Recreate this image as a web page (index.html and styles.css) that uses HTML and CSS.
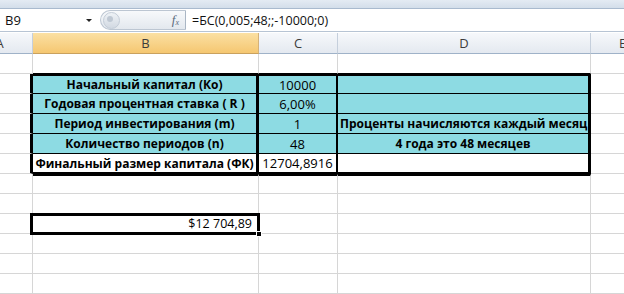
FILE: index.html
```html
<!DOCTYPE html>
<html lang="ru">
<head>
<meta charset="utf-8">
<title>Excel БС</title>
<link rel="stylesheet" href="styles.css">
</head>
<body>
<div class="app">
  <div class="ribbon-edge"></div>
  <div class="formula-bar">
    <div class="namebox"><span class="ref">B9</span><span class="arrow"></span></div>
    <div class="capsule">
      <span class="knob"><span class="knob-in"></span></span>
      <span class="fx">f<sub>x</sub></span>
    </div>
    <div class="formula">=БС(0,005;48;;-10000;0)</div>
  </div>
  <div class="sheet">
    <div class="grid">
      <div class="hd">A</div><div class="hd hd-sel">B</div><div class="hd">C</div><div class="hd">D</div><div class="hd">E</div>

      <div class="c"></div><div class="c above"></div><div class="c above"></div><div class="c above"></div><div class="c"></div>

      <div class="c lft"></div><div class="c t first cb">Начальный капитал (Ко)</div><div class="c t first cc">10000</div><div class="c t first cd"></div><div class="c"></div>
      <div class="c lft"></div><div class="c t cb">Годовая процентная ставка ( R )</div><div class="c t cc">6,00%</div><div class="c t cd"></div><div class="c"></div>
      <div class="c lft"></div><div class="c t cb">Период инвестирования (m)</div><div class="c t cc">1</div><div class="c t cd left">Проценты начисляются каждый месяц</div><div class="c"></div>
      <div class="c lft"></div><div class="c t cb">Количество периодов (n)</div><div class="c t cc">48</div><div class="c t cd">4 года это 48 месяцев</div><div class="c"></div>
      <div class="c lft"></div><div class="c w last cb">Финальный размер капитала (ФК)</div><div class="c w last cc num">12704,8916</div><div class="c w last cd"></div><div class="c"></div>

      <div class="c"></div><div class="c below"></div><div class="c below"></div><div class="c below"></div><div class="c"></div>
      <div class="c"></div><div class="c"></div><div class="c"></div><div class="c"></div><div class="c"></div>
      <div class="c"></div><div class="c active">$12 704,89<span class="sel"></span><span class="handle"></span></div><div class="c"></div><div class="c"></div><div class="c"></div>
      <div class="c"></div><div class="c"></div><div class="c"></div><div class="c"></div><div class="c"></div>
      <div class="c"></div><div class="c"></div><div class="c"></div><div class="c"></div><div class="c"></div>
      <div class="c"></div><div class="c"></div><div class="c"></div><div class="c"></div><div class="c"></div>
    </div>
  </div>
</div>
</body>
</html>
```

FILE: styles.css
```css
* { box-sizing: border-box; }
html, body { margin: 0; padding: 0; background: #ffffff; }
body {
  width: 624px;
  height: 294px;
  overflow: hidden;
  font-family: "Open Sans", "Noto Sans", sans-serif;
}
.app { width: 624px; height: 294px; overflow: hidden; }

.ribbon-edge {
  height: 9px;
  background: linear-gradient(#e4ebf3, #d3deea);
  border-bottom: 1px solid #a9bace;
}

.formula-bar {
  display: flex;
  height: 23px;
  background: #ffffff;
  border-bottom: 1px solid #b7c4d4;
}
.namebox {
  width: 98px;
  display: flex;
  align-items: center;
  justify-content: space-between;
  padding: 0 5px 0 5px;
  font-size: 13px;
  color: #111;
}
.arrow {
  width: 0; height: 0;
  border-left: 3px solid transparent;
  border-right: 3px solid transparent;
  border-top: 3px solid #222;
  margin-right: 1px;
}
.capsule {
  width: 86px;
  margin: 1px 0 1px 2px;
  display: flex;
  align-items: center;
  justify-content: space-between;
  border-radius: 11px 0 0 11px;
  background: linear-gradient(#f7f9fb, #e3e8ee);
  border: 1px solid #bcc6d2;
  border-right: 1px solid #aab6c4;
  padding: 0 6px 0 2px;
}
.knob {
  width: 17px; height: 17px;
  border-radius: 50%;
  background: linear-gradient(#eef2f6, #d2d9e2);
  border: 1px solid #c3ccd7;
  display: flex; align-items: center; justify-content: center;
}
.knob-in {
  width: 6px; height: 6px; border-radius: 50%;
  background: #bfc8d3;
  margin: -3px 0 0 -3px;
}
.fx {
  font-family: "Liberation Serif", serif;
  font-style: italic;
  font-size: 13px;
  color: #5a6a7c;
  line-height: 1;
}
.fx sub { font-size: 8px; vertical-align: -1px; }
.formula {
  flex: 1;
  padding-left: 6px;
  display: flex;
  align-items: center;
  font-size: 12.5px;
  color: #111;
}

.sheet { overflow: hidden; padding-top: 1px; }
.grid {
  display: grid;
  grid-template-columns: 66px 226px 79px 253px 64px;
  grid-template-rows: 21px repeat(12, 20px);
  margin-left: -33px;
  width: 688px;
}
.hd {
  background: linear-gradient(#f6f8fb, #e4e9f0);
  border-right: 1px solid #c5cfdc;
  border-bottom: 1px solid #9fb2c8;
  display: flex; align-items: center; justify-content: center;
  font-size: 13px;
  color: #3c3c3c;
}
.hd-sel {
  background: linear-gradient(#fbe0a3, #f5c771);
  border-right-color: #d4b27a;
  border-bottom-color: #c9a15e;
}
.c {
  border-right: 1px solid #d6d6d6;
  border-bottom: 1px solid #d6d6d6;
  display: flex; align-items: center; justify-content: center;
  font-size: 12px;
  color: #000;
  white-space: nowrap;
  overflow: hidden;
  min-width: 0;
}
.above { border-bottom-color: #000; }
.lft { border-right: 3px solid #000; }
.t { background: #8ddbe3; font-weight: 700; border-bottom-color: #000; }
.w { background: #ffffff; font-weight: 700; border-bottom-color: #000; }
.first { border-top: 2px solid #000; }
.last { border-bottom: 2px solid #000; }
.below { border-top: 2px solid #000; }
.cb { border-right: 3px solid #000; }
.cc { border-right: 2px solid #000; font-weight: 400; font-size: 13px; }
.cd { border-right: 3px solid #000; }
.left { justify-content: flex-start; padding-left: 2px; }
.num { font-weight: 400; }

.active {
  position: relative;
  justify-content: flex-end;
  padding-right: 6px;
  overflow: visible;
  font-size: 12.5px;
}
.sel {
  position: absolute;
  left: -3px; top: -1px; right: -2px; bottom: -2px;
  border: 3px solid #000;
}
.handle {
  position: absolute;
  right: -4px; bottom: -4px;
  width: 6px; height: 6px;
  background: #000;
  border: 1px solid #fff;
}
```
